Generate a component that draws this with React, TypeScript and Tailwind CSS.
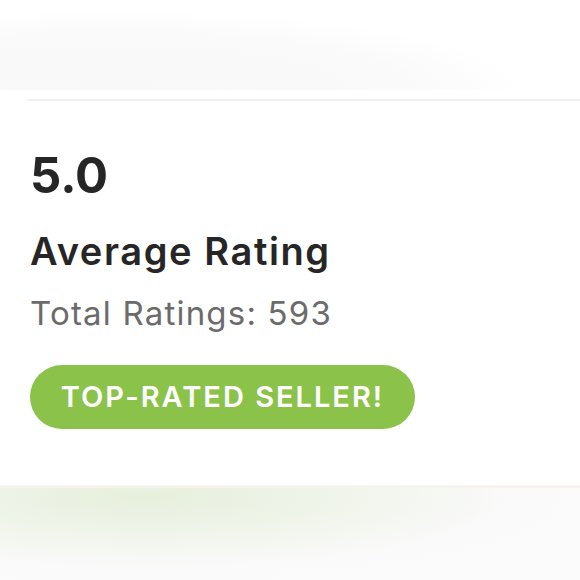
export default function App() {
  return (
    <div className="flex h-[580px] w-[580px] flex-col overflow-hidden bg-[#fbfbfb] font-['Inter',sans-serif]">
      <div className="h-[90px] shrink-0 bg-[radial-gradient(ellipse_at_20%_100%,#f8f8f8_0%,#fafafa_45%,#ffffff_62%)]" />
      <section className="flex h-[395px] shrink-0 flex-col bg-white">
        <div className="ml-[28px] mt-[9px] h-[2px] bg-[#efefed]" />
        <div className="flex flex-col items-start px-[30px] pt-[46px]">
          <h2 className="text-[49px] leading-[58px] font-bold text-[#262626]">5.0</h2>
          <h3 className="mt-[23px] text-[38px] leading-[46px] font-semibold tracking-[1.6px] text-[#262626]">
            Average Rating
          </h3>
          <p className="mt-[19px] text-[33px] leading-[40px] tracking-[1.2px] text-[#6b6b6b]">
            Total Ratings: 593
          </p>
          <span className="mt-[32px] flex h-[64px] w-[385px] items-center justify-center rounded-full bg-[#8bc34a] text-[29px] font-semibold tracking-[2px] text-white">
            TOP-RATED SELLER!
          </span>
        </div>
      </section>
      <div className="h-[3px] shrink-0 bg-[#f6f3ef]" />
      <div className="flex-1 bg-[radial-gradient(ellipse_at_25%_10%,#e6efdc_0%,#f1f5ec_35%,#fafafa_60%,#fcfbfc_100%)]" />
    </div>
  );
}
